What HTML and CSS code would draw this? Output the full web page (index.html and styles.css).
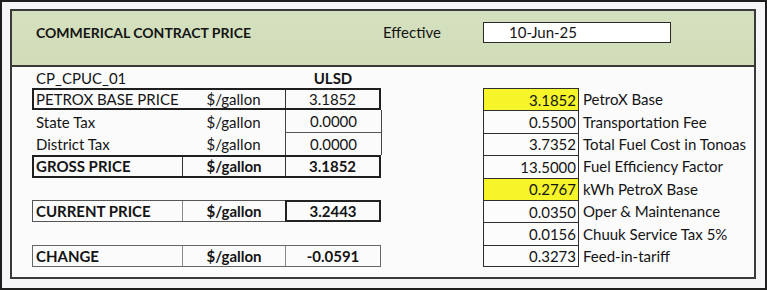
FILE: index.html
```html
<!DOCTYPE html>
<html>
<head>
<meta charset="utf-8">
<link rel="stylesheet" href="styles.css">
</head>
<body>
<div class="frame">
  <div class="sheet">
    <div class="header">
      <div class="title">COMMERICAL CONTRACT PRICE</div>
      <div class="eff">Effective</div>
      <div class="datebox">10-Jun-25</div>
    </div>
    <div class="body">
      <div class="left">
        <div class="row plain">
          <div class="c lbl">CP_CPUC_01</div>
          <div class="c"></div>
          <div class="c mid b">ULSD</div>
        </div>
        <div class="row boxed">
          <div class="c lbl">PETROX BASE PRICE</div>
          <div class="c mid">$/gallon</div>
          <div class="c mid val vl">3.1852</div>
        </div>
        <div class="row plain">
          <div class="c lbl">State Tax</div>
          <div class="c mid">$/gallon</div>
          <div class="c mid val cellA">0.0000</div>
        </div>
        <div class="row plain">
          <div class="c lbl">District Tax</div>
          <div class="c mid">$/gallon</div>
          <div class="c mid val cellB">0.0000</div>
        </div>
        <div class="row boxed b">
          <div class="c lbl">GROSS PRICE</div>
          <div class="c mid vl">$/gallon</div>
          <div class="c mid val vl">3.1852</div>
        </div>
        <div class="row plain"></div>
        <div class="row boxed2 b">
          <div class="c lbl">CURRENT PRICE</div>
          <div class="c mid vlight">$/gallon</div>
          <div class="c mid val strong">3.2443</div>
        </div>
        <div class="row plain"></div>
        <div class="row boxed3 b">
          <div class="c lbl">CHANGE</div>
          <div class="c mid vlight">$/gallon</div>
          <div class="c mid val vlight">-0.0591</div>
        </div>
      </div>
      <div class="right">
        <div class="rrow plain"></div>
        <div class="rrow"><div class="num yellow">3.1852</div><div class="rl">PetroX Base</div></div>
        <div class="rrow"><div class="num">0.5500</div><div class="rl">Transportation Fee</div></div>
        <div class="rrow"><div class="num">3.7352</div><div class="rl">Total Fuel Cost in Tonoas</div></div>
        <div class="rrow"><div class="num">13.5000</div><div class="rl">Fuel Efficiency Factor</div></div>
        <div class="rrow"><div class="num yellow">0.2767</div><div class="rl">kWh PetroX Base</div></div>
        <div class="rrow"><div class="num">0.0350</div><div class="rl">Oper &amp; Maintenance</div></div>
        <div class="rrow"><div class="num">0.0156</div><div class="rl">Chuuk Service Tax 5%</div></div>
        <div class="rrow last"><div class="num">0.3273</div><div class="rl">Feed-in-tariff</div></div>
      </div>
    </div>
  </div>
</div>
</body>
</html>
```

FILE: styles.css
```css
* { box-sizing: border-box; }
html, body { margin: 0; padding: 0; }
body {
  font-family: Lato, "Open Sans", sans-serif;
  color: #141414;
  font-size: 15px;
}
.frame {
  width: 767px;
  height: 290px;
  border: 2px solid #1e1e1e;
  background: #f6f6f8;
  padding: 7px 9px 9px 8px;
}
.sheet {
  width: 746px;
  height: 270px;
  border: 2px solid #3a3a3a;
  background: #fbfbfc;
  display: flex;
  flex-direction: column;
}
.header {
  height: 56px;
  background: linear-gradient(#d5e0be, #d1ddb9);
  border-bottom: 2px solid #3a3a3a;
  display: flex;
  align-items: center;
  padding-left: 24px;
  padding-bottom: 12px;
}
.title {
  font-weight: bold;
  font-size: 14px;
  width: 347px;
}
.eff {
  width: 100px;
  font-size: 15px;
}
.datebox {
  width: 188px;
  height: 21px;
  background: #fff;
  border: 1px solid #2a2a2a;
  padding-left: 25px;
  line-height: 19px;
  font-size: 15px;
}
.body {
  display: flex;
  padding-left: 20px;
  padding-top: 0;
}
.left {
  width: 349px;
  display: flex;
  flex-direction: column;
}
.row {
  height: 22.4px;
  display: grid;
  grid-template-columns: 150px 103px 96px;
  align-items: stretch;
}
.row:first-child { height: 21px; }
.c {
  display: flex;
  align-items: center;
  white-space: nowrap;
}
.lbl { padding-left: 4px; }
.mid { justify-content: center; }
.b { font-weight: bold; }
.boxed {
  border: 2px solid #1f1f1f;
  grid-template-columns: 148px 103px 94px;
}
.boxed .lbl { padding-left: 2px; }
.boxed2 {
  border: 1px solid #555;
  grid-template-columns: 149px 103px 95px;
}
.boxed2 .lbl, .boxed3 .lbl { padding-left: 3px; }
.boxed3 {
  border: 1px solid #666;
  grid-template-columns: 149px 103px 95px;
}
.vl { border-left: 1px solid #333; }
.vlight { border-left: 1px solid #888; }
.strong {
  border: 2px solid #222;
  margin: -1px -1px -1px 0;
}
.cellA {
  border-left: 1px solid #444;
  border-right: 1px solid #444;
  border-bottom: 1px solid #555;
  margin-right: -1px;
}
.cellB {
  border-left: 1px solid #444;
  border-right: 1px solid #444;
  margin-right: -1px;
}
.right {
  margin-left: 102px;
  display: flex;
  flex-direction: column;
}
.rrow {
  height: 22.4px;
  display: flex;
  align-items: stretch;
}
.rrow.plain { height: 21px; }
.num {
  width: 96px;
  border: 1px solid #2e2e2e;
  border-bottom: none;
  text-align: right;
  padding-right: 2px;
  display: flex;
  align-items: center;
  justify-content: flex-end;
  background: #fcfcfd;
}
.rrow.last .num { border-bottom: 1px solid #2e2e2e; }
.num.yellow { background: #f5f52a; }
.rl {
  display: flex;
  align-items: center;
  padding-left: 4px;
  white-space: nowrap;
}
```
